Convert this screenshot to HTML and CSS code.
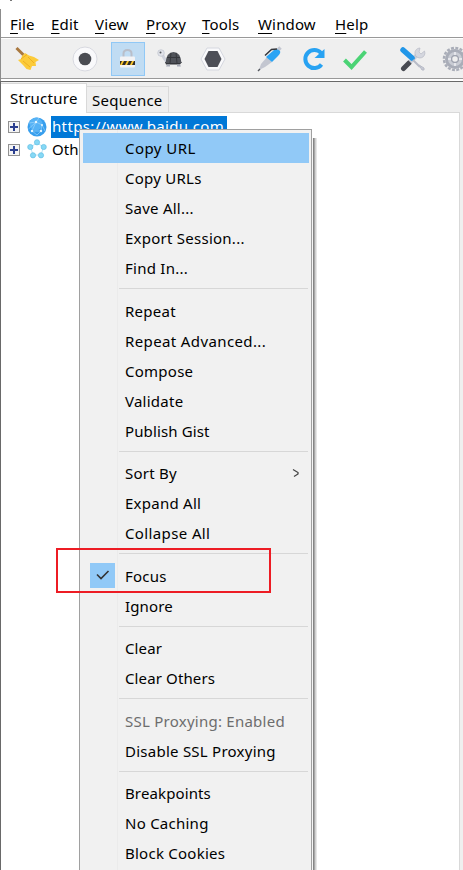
FILE: index.html
```html
<!DOCTYPE html>
<html lang="en">
<head>
    <meta charset="UTF-8">
    <meta name="viewport" content="width=device-width, initial-scale=1.0">
    <title>Charles</title>
    <link rel="stylesheet" href="styles.css">
</head>
<body>
    <span class="speck"></span>
    <div class="window">
        <!-- Menu Bar -->
        <nav class="menubar">
            <a class="m-file"><u>F</u>ile</a>
            <a class="m-edit"><u>E</u>dit</a>
            <a class="m-view"><u>V</u>iew</a>
            <a class="m-proxy"><u>P</u>roxy</a>
            <a class="m-tools"><u>T</u>ools</a>
            <a class="m-window"><u>W</u>indow</a>
            <a class="m-help"><u>H</u>elp</a>
        </nav>

        <!-- Toolbar -->
        <div class="toolbar">
            <span class="tool broom">
                <svg width="26" height="26" viewBox="0 0 26 26">
                    <path d="M2.500 2 L9.500 9" stroke="#a9783f" stroke-width="3"/>
                    <path d="M8 10 L11 7 L15 9.500 L20 11 L25 14 L21.500 16 L22 20 L18 20 L16.500 24 L12.500 23 L9 19 L4 14 L7 13 Z" fill="#fccb3a"/>
                    <path d="M7 13 L13 8.500 M9 15 L16 21 M14 11 L20 17" stroke="#eeb022" fill="none"/>
                </svg>
            </span>
            <span class="tool">
                <svg width="26" height="26" viewBox="0 0 26 26">
                    <circle cx="13" cy="13" r="12" fill="#f9f9fb" stroke="#d8d9e0"/>
                    <circle cx="13" cy="13" r="6.300" fill="#4a4c52"/>
                </svg>
            </span>
            <span class="tool active">
                <svg width="26" height="26" viewBox="0 0 26 26">
                    <path d="M8.500 12 V7.500 Q8.500 4 12.500 4 Q16.500 4 16.500 7.500 V12" fill="none" stroke="#b9bec9" stroke-width="2"/>
                    <rect x="5" y="10.500" width="15" height="11" rx="1" fill="#f3f3f5"/>
                    <rect x="5" y="15" width="15" height="4" fill="#2f2d2b"/>
                    <path d="M5 19 L7 15 H9 L7 19 Z M10 19 L12 15 H14 L12 19 Z M15 19 L17 15 H19 L17 19 Z" fill="#fbc72c"/>
                </svg>
            </span>
            <span class="tool">
                <svg width="26" height="26" viewBox="0 0 26 26">
                    <path d="M5 8 L7 12 L10 16" stroke="#cfd2dc" stroke-width="3" fill="none"/>
                    <circle cx="4" cy="7" r="3.300" fill="#e1e3ea" stroke="#b9bdc9" stroke-width=".6"/>
                    <circle cx="3.500" cy="6.500" r="1" fill="#55585f"/>
                    <path d="M8 16 H25 L23 18.500 H9 Z" fill="#34363b"/>
                    <path d="M8.500 17 Q9.500 6 16.500 6 Q23.500 6 24.500 17 Z" fill="#50535a"/>
                    <path d="M10 11.500 H23 M14 7 L13 17 M19 7 L20 17" stroke="#35373c" fill="none"/>
                    <path d="M10 18.500 H13 V20.500 H9 Z M20 18.500 H23 L24 20.500 H20 Z" fill="#a8acb8"/>
                </svg>
            </span>
            <span class="tool">
                <svg width="26" height="26" viewBox="0 0 26 26">
                    <path d="M7 2 H19 L25 13 L19 24 H7 L1 13 Z" fill="#f9f9fb" stroke="#d5d7df"/>
                    <path d="M8.500 5 H17.500 L21.500 13 L17.500 21 H8.500 L4.500 13 Z" fill="#4d4f57"/>
                </svg>
            </span>
            <span class="tool pen">
                <svg width="26" height="26" viewBox="0 0 26 26">
                    <path d="M2 24 L4 18 L10 11 L15 16 L8 21 Z" fill="#c3c6d0"/>
                    <path d="M1 25 L3 23" stroke="#55585f" stroke-width="1.500"/>
                    <path d="M20 5 L23.500 1.500" stroke="#c3c6d0" stroke-width="3.500"/>
                    <path d="M9 11 L17 4 Q20 2 23 5 Q24 7 21 10 L15 16 Z" fill="#2aa4f4"/>
                    <path d="M8 9.500 L14.500 3.500 L20 3" fill="none" stroke="#34363b" stroke-width="1.500"/>
                </svg>
            </span>
            <span class="tool refresh">
                <svg width="26" height="26" viewBox="0 0 26 26">
                    <path d="M21 7 A9 9 0 1 0 21.500 18.500" fill="none" stroke="#28a2f2" stroke-width="4"/>
                    <path d="M24.500 3 V12 H14.500 Z" fill="#28a2f2"/>
                </svg>
            </span>
            <span class="tool">
                <svg width="26" height="26" viewBox="0 0 26 26">
                    <path d="M2.500 14 L9.500 21 L23.500 5.500" fill="none" stroke="#4bd375" stroke-width="4"/>
                </svg>
            </span>
            <span class="tool wrench">
                <svg width="26" height="26" viewBox="0 0 26 26">
                    <path d="M3.500 22.500 L9 17" stroke="#484a51" stroke-width="5" stroke-linecap="round"/>
                    <path d="M10 16 L17 9" stroke="#c9ccd6" stroke-width="4"/>
                    <path d="M24.500 5 A5 5 0 1 1 20 2 L19 6 L21 8 Z" fill="#d5d7df" stroke="#b7bac5" stroke-width=".7"/>
                    <path d="M3 4 L12 12" stroke="#2196e8" stroke-width="5.500" stroke-linecap="round"/>
                    <path d="M13 14 L20 21" stroke="#b8bbc7" stroke-width="2"/>
                    <path d="M19 19 L24 22 V24 H22 Z" fill="#c6c9d3" stroke="#b8bbc7"/>
                </svg>
            </span>
            <span class="tool">
                <svg width="26" height="26" viewBox="0 0 26 26">
                    <circle cx="13" cy="13" r="11" fill="none" stroke="#a9adb8" stroke-width="2.500" stroke-dasharray="2.900 1.420"/>
                    <circle cx="13" cy="13" r="8.500" fill="#c9ccd4" stroke="#a9adb8" stroke-width="3"/>
                    <circle cx="13" cy="13" r="3.500" fill="#efefef" stroke="#a0a4b0" stroke-width="1.500"/>
                    <path d="M13 6 V9 M13 17 V20 M6 13 H9 M17 13 H20" stroke="#f0f0f3" stroke-width="1.500"/>
                </svg>
            </span>
        </div>

        <!-- Structure / Sequence -->
        <div class="panel">
            <div class="tabs">
                <div class="tab selected">Structure</div>
                <div class="tab">Sequence</div>
            </div>
            <div class="tree">
                <div class="node">
                    <span class="expander"></span>
                    <svg width="20" height="20" viewBox="0 0 20 20">
                        <circle cx="10" cy="10" r="9.500" fill="#379eed"/>
                        <circle cx="9" cy="7" r="6.500" fill="#56b2f5"/>
                        <path d="M1.500 12 L9 5 L15 8 L18 14 M9 5 L5 14 L14 14 L15 8 M5 14 L10 18 L14 14 M9 5 L12 1 M2 6 L9 5" fill="none" stroke="#a4d8fb" stroke-width=".6"/>
                        <g fill="#e9f7ff"><circle cx="9" cy="5" r="1.200"/><circle cx="15" cy="8" r="1"/><circle cx="5" cy="14" r="1.200"/><circle cx="14" cy="14" r="1.200"/></g>
                    </svg>
                    <span class="label highlighted">https://www.baidu.com</span>
                </div>
                <div class="node">
                    <span class="expander"></span>
                    <svg width="20" height="20" viewBox="0 0 20 20">
                        <path d="M10 4 L16.500 8 L14 16 H6 L3.500 8 Z" fill="none" stroke="#b9e4f5"/>
                        <g fill="#86d8f5" stroke="#62bfe4" stroke-width=".7"><circle cx="10" cy="3.300" r="2.600"/><circle cx="16.700" cy="8" r="2.600"/><circle cx="14" cy="16.300" r="2.600"/><circle cx="6" cy="16.300" r="2.600"/><circle cx="3.300" cy="8" r="2.600"/></g>
                    </svg>
                    <span class="label">Other Hosts</span>
                </div>
            </div>
        </div>
    </div>

    <!-- Context Menu -->
    <ul class="context-menu">
        <li class="hover"><span>Copy URL</span></li>
        <li><span>Copy URLs</span></li>
        <li><span>Save All...</span></li>
        <li><span>Export Session...</span></li>
        <li><span>Find In...</span></li>
        <li class="separator"></li>
        <li><span>Repeat</span></li>
        <li><span class="wide">Repeat Advanced...</span></li>
        <li><span>Compose</span></li>
        <li><span>Validate</span></li>
        <li><span class="tight">Publish Gist</span></li>
        <li class="separator"></li>
        <li><span>Sort By</span>
            <svg class="arrow" width="8" height="10" viewBox="0 0 8 10"><path d="M1 1.500 L6 4.500 L6 6 L2 8.500" fill="none" stroke="#444" stroke-width="1.300"/></svg>
        </li>
        <li><span>Expand All</span></li>
        <li><span class="wide">Collapse All</span></li>
        <li class="separator"></li>
        <li class="checked">
            <svg class="check" width="25" height="25" viewBox="0 0 25 25"><path d="M7 11.500 L11 15.500 L18.500 8" fill="none" stroke="#333" stroke-width="1.600"/></svg>
            <span>Focus</span>
        </li>
        <li><span class="tight">Ignore</span></li>
        <li class="separator"></li>
        <li><span class="tight">Clear</span></li>
        <li><span class="tight">Clear Others</span></li>
        <li class="separator"></li>
        <li class="disabled"><span>SSL Proxying: Enabled</span></li>
        <li><span>Disable SSL Proxying</span></li>
        <li class="separator"></li>
        <li><span class="tight">Breakpoints</span></li>
        <li><span>No Caching</span></li>
        <li><span>Block Cookies</span></li>
    </ul>
    <div class="marker"></div>
</body>
</html>
```
FILE: styles.css
```css
* {
    margin: 0;
    padding: 0;
    box-sizing: border-box;
}
body {
    position: relative;
    height: 870px;
    padding-top: 9px;
    overflow: hidden;
    background-color: #fff;
    font-family: "Noto Sans", "Open Sans", sans-serif;
    font-size: 15px;
    color: #000;
}
.speck {
    position: absolute;
    top: 0;
    left: 10px;
    width: 2px;
    height: 1px;
    background-color: #777;
}
.window {
    display: flex;
    flex-direction: column;
    height: 861px;
    border-left: 1px solid #8c8c8c;
}

/* Menu bar */
.menubar {
    display: flex;
    height: 28px;
    padding-left: 9px;
    line-height: 31px;
    letter-spacing: 0.150px;
}
.menubar a {
    white-space: nowrap;
}
.menubar u {
    text-decoration-thickness: 1px;
    text-underline-offset: 3px;
}
.m-file { width: 41px; }
.m-edit { width: 44px; }
.m-view { width: 51px; }
.m-proxy { width: 56px; }
.m-tools { width: 56px; }
.m-window { width: 77px; }

/* Toolbar */
.toolbar {
    display: flex;
    align-items: center;
    flex-shrink: 0;
    height: 42px;
    padding-top: 2px;
    padding-left: 9px;
    overflow: hidden;
    border-top: 1px solid #999;
    border-bottom: 1px solid #999;
    background-color: #efefef;
    box-shadow: inset 0 1px #fff;
}
.tool {
    display: flex;
    align-items: center;
    justify-content: center;
    flex-shrink: 0;
    width: 34px;
    height: 34px;
    margin-right: 8.500px;
}
.tool.broom {
    margin-right: 24px;
}
.tool.active {
    border: 1px solid #90c8f6;
    background-color: #c0dcf3;
}
.tool.pen {
    margin-left: 15px;
}
.tool.wrench {
    margin-left: 15px;
}

/* Tabs */
.panel {
    display: flex;
    flex-direction: column;
    flex: 1;
    margin-top: 2px;
    margin-left: -1px;
    padding-right: 3px;
    border-top: 1px solid #696969;
    border-left: 1px solid #696969;
    background-color: #efefef;
}
.tabs {
    display: flex;
    align-items: flex-end;
    height: 31px;
    box-shadow: inset 0 -1px #d9d9d9;
}
.tab {
    width: 82px;
    height: 27px;
    padding-left: 5px;
    border: 1px solid #d9d9d9;
    border-left: none;
    line-height: 27px;
    letter-spacing: 0.250px;
}
.tab.selected {
    width: 86px;
    height: 30px;
    padding-left: 9px;
    border-bottom: none;
    background-color: #fff;
    line-height: 28px;
}

/* Tree */
.tree {
    flex: 1;
    padding-top: 3px;
    border-right: 1px solid #d9d9d9;
    background-color: #fff;
}
.node {
    display: flex;
    align-items: center;
    height: 22.500px;
    padding-left: 7px;
}
.node svg {
    margin-bottom: 1px;
}
.expander {
    width: 12px;
    height: 12px;
    margin-right: 7px;
    border: 1px solid #919191;
    background: linear-gradient(#2b3f8f, #2b3f8f) center / 8px 2px no-repeat,
                linear-gradient(#2b3f8f, #2b3f8f) center / 2px 8px no-repeat,
                #f4f4f4;
}
.label {
    height: 22px;
    margin-left: 4px;
    padding: 0 1px;
    line-height: 20px;
    white-space: nowrap;
}
.highlighted {
    width: 176px;
    background-color: #0078d7;
    color: #fff;
    letter-spacing: 0.350px;
}

/* Context menu */
.context-menu {
    position: absolute;
    top: 129px;
    left: 79px;
    width: 233px;
    height: 760px;
    padding: 3px 2px 0 3px;
    border: 1px solid #a0a0a0;
    background: linear-gradient(#ebebeb, #ebebeb) 37px 0 / 1px 100% no-repeat, #f1f1f1;
    list-style: none;
    letter-spacing: 0.250px;
}
.context-menu::after {
    content: "";
    position: absolute;
    top: 8px;
    left: 232px;
    width: 5px;
    height: 760px;
    background: linear-gradient(to right, #f5f5f5 1px, #858585 1px 2px, #a8a8a8 2px 3px, #d0d0d0 3px 4px, #e6e6e6 4px);
}
.context-menu li {
    display: flex;
    align-items: center;
    position: relative;
    height: 30px;
    padding-left: 42px;
    white-space: nowrap;
}
.context-menu .hover {
    width: 226px;
    background-color: #91c9f7;
    letter-spacing: 0.450px;
}
.context-menu .tight {
    letter-spacing: 0.120px;
}
.context-menu .wide {
    letter-spacing: 0.380px;
}
.context-menu .disabled {
    color: #6d6d6d;
}
.context-menu .separator {
    display: block;
    height: 12.500px;
    padding: 5px 1px 0 36px;
}
.separator::before {
    content: "";
    display: block;
    height: 1px;
    background-color: #d7d7d7;
}
.arrow {
    margin-left: auto;
    margin-right: 9px;
}
.context-menu .checked {
    padding-left: 7px;
}
.check {
    margin-right: 10px;
    background-color: #91c9f7;
}
.marker {
    position: absolute;
    top: 548px;
    left: 56px;
    width: 215px;
    height: 45px;
    border: 2px solid #ed1c24;
}
```
